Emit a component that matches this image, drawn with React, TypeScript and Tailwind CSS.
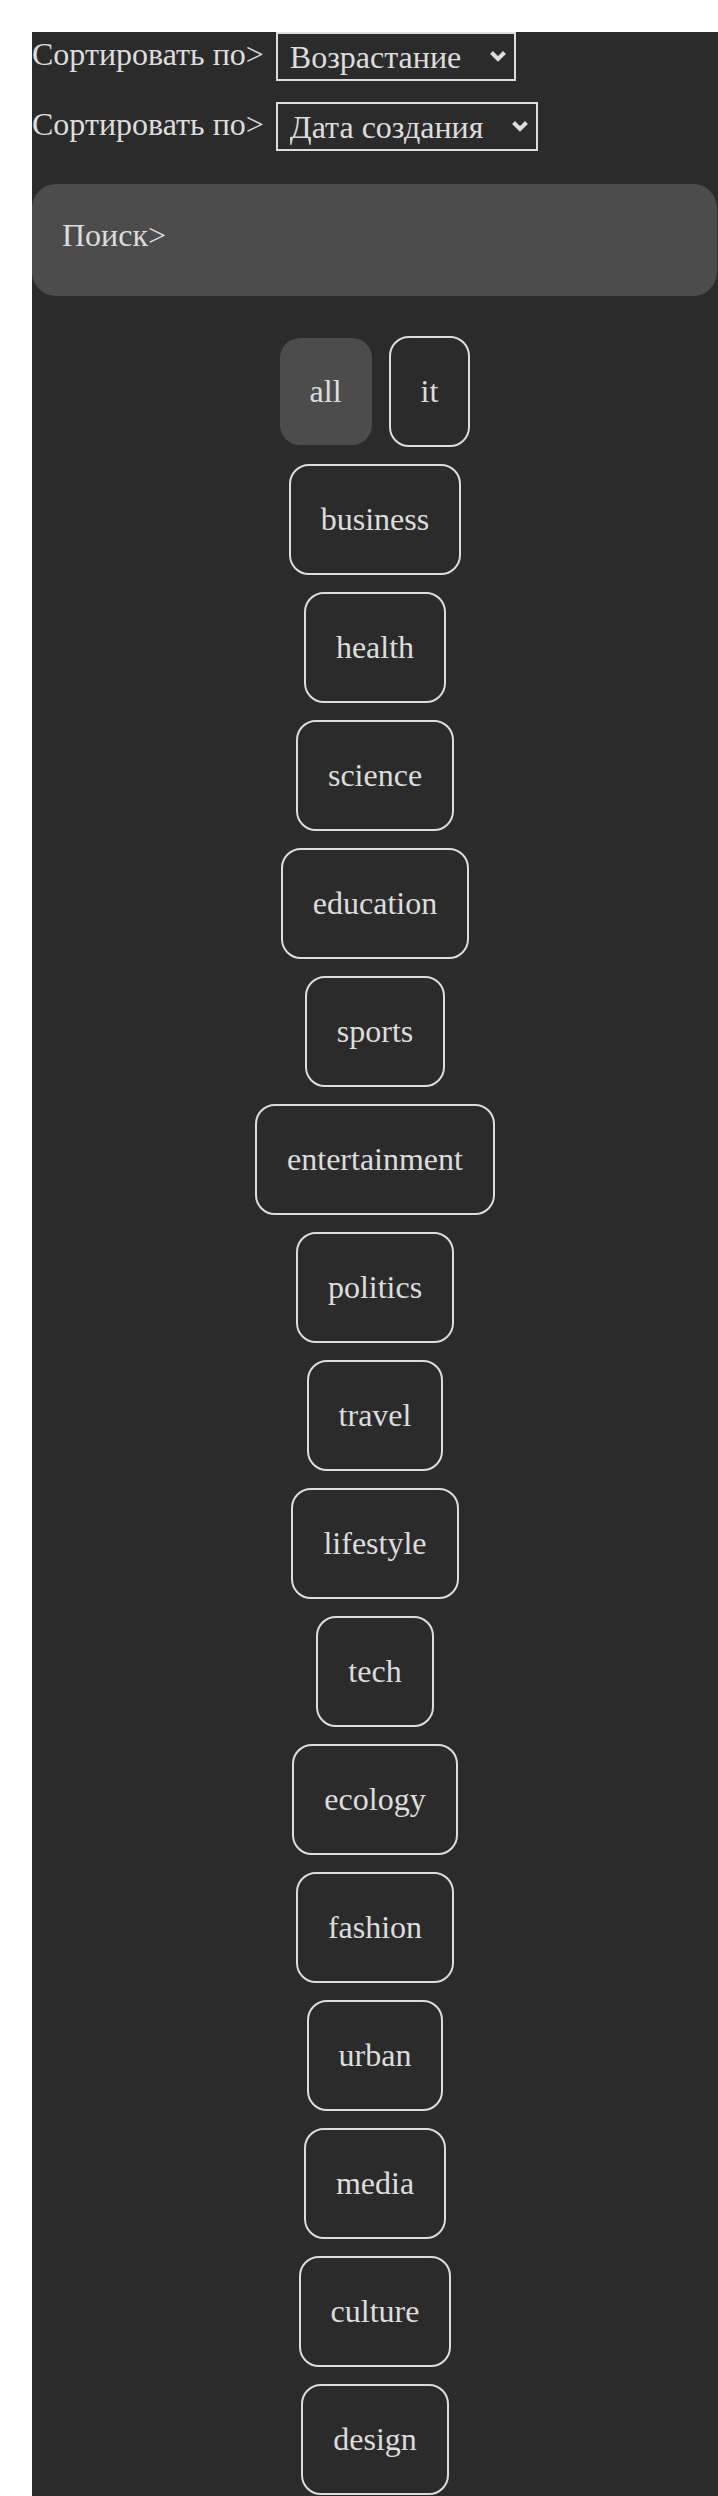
import { useState } from 'react';

const tags = [
  'all', 'it', 'business', 'health', 'science', 'education', 'sports',
  'entertainment', 'politics', 'travel', 'lifestyle', 'tech', 'ecology',
  'fashion', 'urban', 'media', 'culture', 'design',
];

function Chevron() {
  return (
    <svg width="18" height="12" viewBox="0 0 18 12" className="pointer-events-none absolute right-[9px] top-[18px]">
      <path d="M2.5 2.5 L9 9 L15.5 2.5" fill="none" stroke="#dddddd" strokeWidth="4" strokeLinejoin="miter" />
    </svg>
  );
}

function SortRow({ options, value, onChange, width }: { options: string[]; value: string; onChange: (v: string) => void; width: string }) {
  return (
    <div className="flex items-start gap-3">
      <span className="pt-[4px]">Сортировать по&gt;</span>
      <div className={`relative ${width}`}>
        <select
          value={value}
          onChange={(e) => onChange(e.target.value)}
          className="w-full h-[49px] appearance-none border-2 border-[#dddddd] bg-transparent pl-3 py-1 font-['Liberation_Serif',serif] text-[32px] leading-[normal] text-[#dddddd] outline-none"
        >
          {options.map((o) => (
            <option key={o} value={o} className="bg-[#2b2b2b]">{o}</option>
          ))}
        </select>
        <Chevron />
      </div>
    </div>
  );
}

export default function App() {
  const [order, setOrder] = useState('Возрастание');
  const [field, setField] = useState('Дата создания');
  const [active, setActive] = useState('all');

  return (
    <div className="min-h-screen bg-white pt-8 pl-8 font-['Liberation_Serif',serif] text-[32px] leading-[normal] text-[#dddddd]">
      <div className="min-h-[calc(100vh-32px)] bg-[#2b2b2b]">
        <div className="flex flex-col gap-[21px]">
          <SortRow options={['Возрастание', 'Убывание']} value={order} onChange={setOrder} width="w-[240px]" />
          <SortRow options={['Дата создания', 'Название']} value={field} onChange={setField} width="w-[262px]" />
        </div>

        <div className="mt-[33px] mr-px h-[112px] rounded-[24px] bg-[#4c4c4c] pt-[33px] pl-[30px]">
          Поиск&gt;
        </div>

        <div className="mx-auto mt-[40px] flex w-[250px] flex-wrap items-center justify-center gap-[17px] pb-8">
          {tags.map((t) =>
            t === active ? (
              <button
                key={t}
                onClick={() => setActive(t)}
                className="rounded-[20px] bg-[#4c4c4c] px-[30px] py-[35px] font-['Liberation_Serif',serif] text-[32px] leading-[normal] text-[#dddddd]"
              >
                {t}
              </button>
            ) : (
              <button
                key={t}
                onClick={() => setActive(t)}
                className="rounded-[20px] border-2 border-[#dddddd] px-[30px] py-[35px] font-['Liberation_Serif',serif] text-[32px] leading-[normal] text-[#dddddd]"
              >
                {t}
              </button>
            )
          )}
        </div>
      </div>
    </div>
  );
}
